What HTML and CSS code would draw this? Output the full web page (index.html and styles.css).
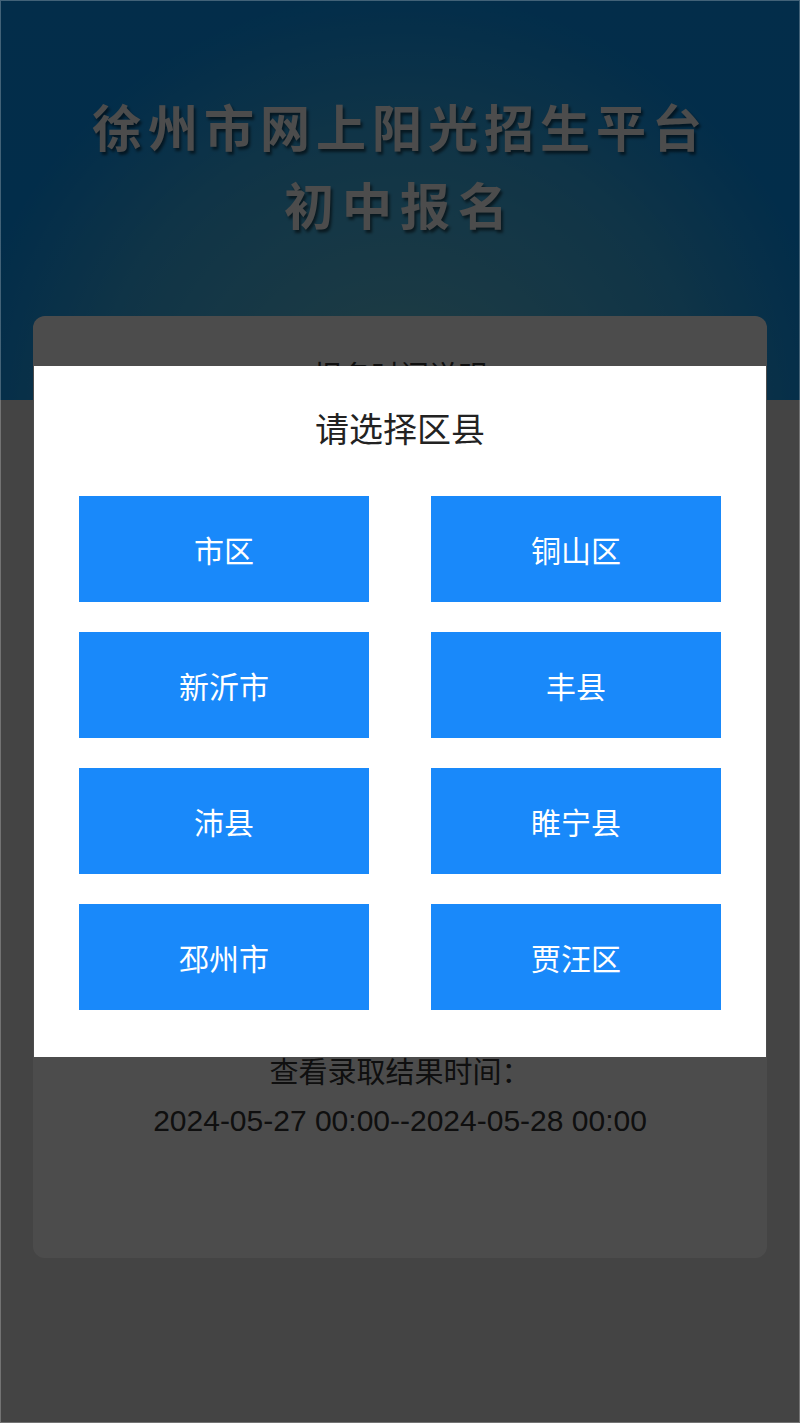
FILE: index.html
```html
<!DOCTYPE html>
<html lang="zh-CN">
<head>
    <meta charset="UTF-8">
    <meta name="viewport" content="width=device-width, initial-scale=1.0">
    <title>徐州市网上阳光招生平台 - 初中报名</title>
    <link rel="stylesheet" href="styles.css">
</head>
<body>
    <div class="page">
        <header class="banner">
            <h1 class="banner-title">徐州市网上阳光招生平台</h1>
            <p class="banner-sub">初中报名</p>
        </header>

        <main class="card">
            <h2 class="card-title">报名时间说明</h2>
            <div class="result">
                <p>查看录取结果时间：</p>
                <p class="date">2024-05-27 00:00--2024-05-28 00:00</p>
            </div>
        </main>
    </div>

    <!-- area picker -->
    <div class="mask">
        <div class="dialog">
            <h3 class="dialog-title">请选择区县</h3>
            <div class="area-grid">
                <button class="area-btn">市区</button>
                <button class="area-btn">铜山区</button>
                <button class="area-btn">新沂市</button>
                <button class="area-btn">丰县</button>
                <button class="area-btn">沛县</button>
                <button class="area-btn">睢宁县</button>
                <button class="area-btn">邳州市</button>
                <button class="area-btn">贾汪区</button>
            </div>
        </div>
    </div>
</body>
</html>
```

FILE: styles.css
```css
:root {
    --primary-color: #1989fa;
    --page-color: #e4e4e4;
    --text-color: #333333;
    --cjk: "Noto Sans CJK SC", "Noto Sans", sans-serif;
}

body {
    margin: 0;
    background-color: var(--page-color);
    font-family: "Liberation Sans", var(--cjk);
    color: var(--text-color);
}

.banner {
    height: 400px;
    box-sizing: border-box;
    padding-top: 86px;
    text-align: center;
    color: #ffffff;
    background:
        radial-gradient(circle at 50% 108%, rgba(150, 225, 215, 0.75) 0, rgba(110, 205, 225, 0.45) 300px, rgba(40, 160, 245, 0) 440px),
        linear-gradient(180deg, #0a98f8, #0896f6);
}

.banner-title,
.banner-sub {
    margin: 0;
    font-family: var(--cjk);
    font-size: 50px;
    font-weight: 700;
    line-height: 78px;
    text-shadow: 2px 3px 3px rgba(0, 0, 0, 0.55);
}

.banner-title {
    letter-spacing: 6px;
}

.banner-sub {
    letter-spacing: 8px;
}

.card {
    display: flex;
    flex-direction: column;
    height: 942px;
    box-sizing: border-box;
    margin: -84px 33px 0;
    padding: 34px 20px 113px;
    background-color: #ffffff;
    border-radius: 12px;
    text-align: center;
}

.card p,
.card-title {
    margin: 0;
    font-size: 29px;
    font-weight: 400;
    line-height: 48px;
}

.card-title {
    font-family: var(--cjk);
}

.result {
    margin-top: auto;
}

.card .date {
    font-size: 30px;
}

.mask {
    position: fixed;
    inset: 0;
    display: flex;
    align-items: center;
    justify-content: center;
    background-color: rgba(0, 0, 0, 0.7);
    border: 1px solid rgba(255, 255, 255, 0.25);
}

.dialog {
    width: 732px;
    box-sizing: border-box;
    padding: 45px 45px 47px;
    background-color: #ffffff;
}

.dialog-title {
    margin: 0 0 51px;
    font-family: var(--cjk);
    font-size: 34px;
    font-weight: 400;
    line-height: 34px;
    color: #222222;
    text-align: center;
}

.area-grid {
    display: grid;
    grid-template-columns: 290px 290px;
    grid-auto-rows: 106px;
    column-gap: 62px;
    row-gap: 30px;
}

.area-btn {
    padding: 0;
    border: none;
    background-color: var(--primary-color);
    color: #ffffff;
    font-family: var(--cjk);
    font-size: 30px;
    cursor: pointer;
}
```
